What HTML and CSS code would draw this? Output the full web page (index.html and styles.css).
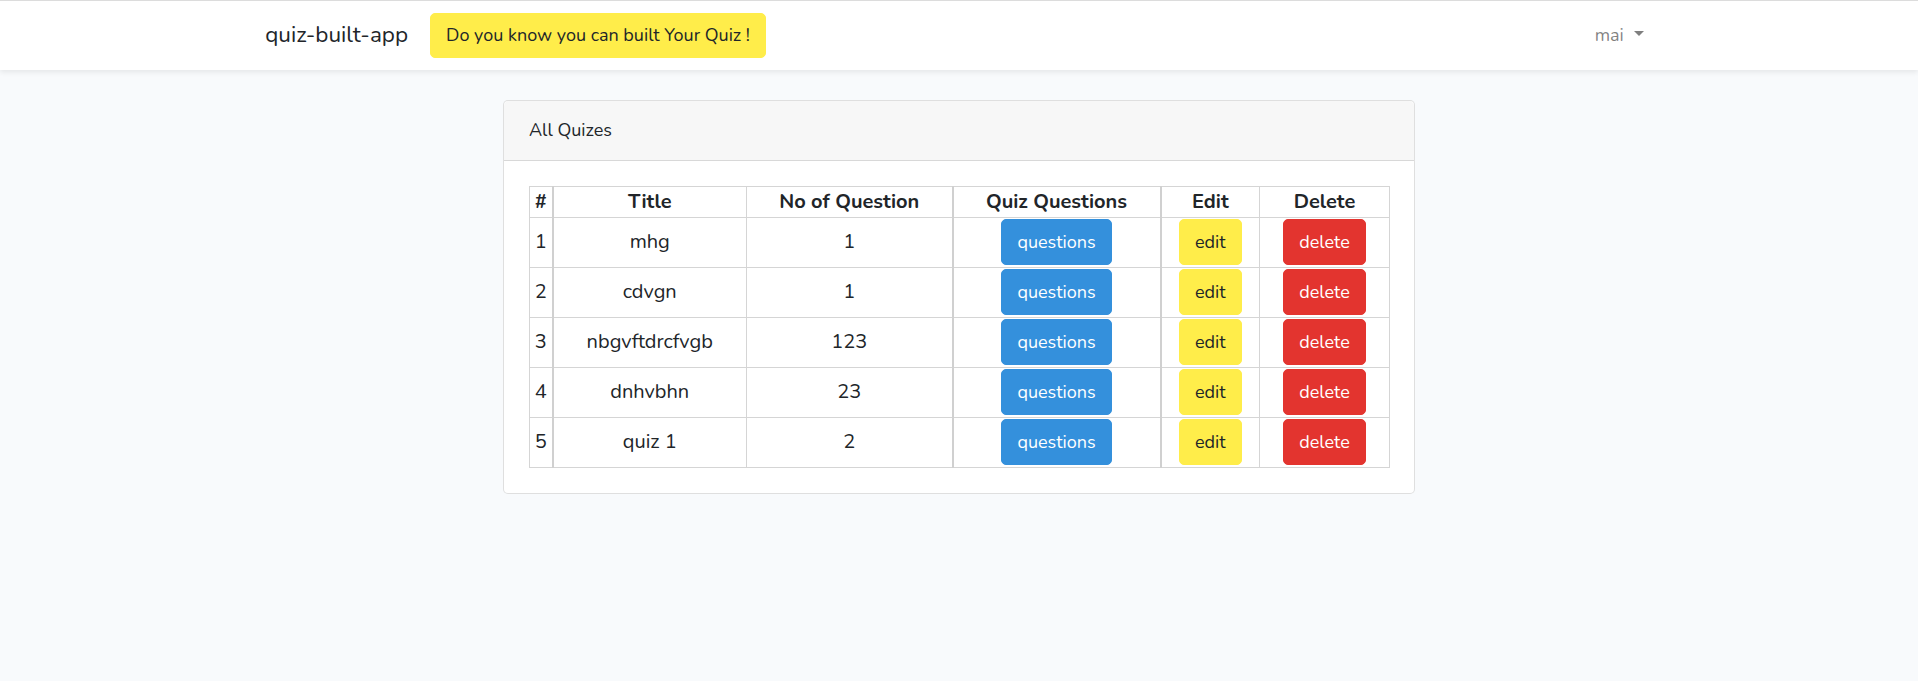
FILE: index.html
```html
<!DOCTYPE html>
<html>
<head>
<meta charset="utf-8">
<title>quiz-built-app</title>
<link rel="stylesheet" href="styles.css">
</head>
<body>
<nav class="navbar">
  <div class="container nav-inner">
    <a class="brand">quiz-built-app</a>
    <span class="tip">Do you know you can built Your Quiz !</span>
    <div class="user">mai <span class="caret"></span></div>
  </div>
</nav>
<main class="main">
  <div class="card">
    <div class="card-header">All Quizes</div>
    <div class="card-body">
      <table class="quiz-table">
        <colgroup>
          <col class="c-num"><col class="c-title"><col class="c-count"><col class="c-q"><col class="c-edit"><col class="c-del">
        </colgroup>
        <thead>
          <tr><th class="thick">#</th><th>Title</th><th class="thick">No of Question</th><th class="thick">Quiz Questions</th><th>Edit</th><th>Delete</th></tr>
        </thead>
        <tbody>
          <tr><td class="thick">1</td><td>mhg</td><td class="thick">1</td><td class="thick"><div class="cell"><a class="btn btn-blue">questions</a></div></td><td><div class="cell"><a class="btn btn-yellow">edit</a></div></td><td><div class="cell"><a class="btn btn-red">delete</a></div></td></tr>
          <tr><td class="thick">2</td><td>cdvgn</td><td class="thick">1</td><td class="thick"><div class="cell"><a class="btn btn-blue">questions</a></div></td><td><div class="cell"><a class="btn btn-yellow">edit</a></div></td><td><div class="cell"><a class="btn btn-red">delete</a></div></td></tr>
          <tr><td class="thick">3</td><td>nbgvftdrcfvgb</td><td class="thick">123</td><td class="thick"><div class="cell"><a class="btn btn-blue">questions</a></div></td><td><div class="cell"><a class="btn btn-yellow">edit</a></div></td><td><div class="cell"><a class="btn btn-red">delete</a></div></td></tr>
          <tr><td class="thick">4</td><td>dnhvbhn</td><td class="thick">23</td><td class="thick"><div class="cell"><a class="btn btn-blue">questions</a></div></td><td><div class="cell"><a class="btn btn-yellow">edit</a></div></td><td><div class="cell"><a class="btn btn-red">delete</a></div></td></tr>
          <tr><td class="thick">5</td><td>quiz 1</td><td class="thick">2</td><td class="thick"><div class="cell"><a class="btn btn-blue">questions</a></div></td><td><div class="cell"><a class="btn btn-yellow">edit</a></div></td><td><div class="cell"><a class="btn btn-red">delete</a></div></td></tr>
        </tbody>
      </table>
    </div>
  </div>
</main>
</body>
</html>
```
FILE: styles.css
```css
* { box-sizing: border-box; }
html, body { margin: 0; }
body {
  background: #f8fafc;
  font-family: "Nunito", "Lato", "Noto Sans", sans-serif;
  font-size: 18px;
  line-height: 1.6;
  color: #212529;
}
.navbar {
  background: #fff;
  border-top: 1px solid #dcdcdc;
  box-shadow: 0 2.5px 5px rgba(0,0,0,.075);
  padding: 10px 0;
}
.container {
  max-width: 1425px;
  margin: 0 auto;
  padding: 0 18.75px;
}
.nav-inner {
  display: flex;
  align-items: center;
  min-height: 48.8px;
}
.brand {
  font-size: 22.5px;
  color: #212529;
  margin-right: 22px;
  line-height: 1.6;
}
.tip {
  background: #ffed4a;
  border: 1px solid #ffed4a;
  border-radius: 5px;
  padding: 7.5px 15px;
  color: #212529;
}
.user {
  margin-left: auto;
  color: rgba(0,0,0,.5);
  padding: 10px 9px 10px 8px;
  display: flex;
  align-items: center;
}
.caret {
  display: inline-block;
  width: 0;
  height: 0;
  margin-left: 10px;
  margin-top: -4px;
  border-top: 5.4px solid rgba(0,0,0,.5);
  border-left: 5.4px solid transparent;
  border-right: 5.4px solid transparent;
}
.main { padding: 30px 0; }
.card {
  width: 912px;
  margin: 0 auto;
  background: #fff;
  border: 1px solid rgba(0,0,0,.125);
  border-radius: 5px;
}
.card-header {
  padding: 15px 25px;
  background: rgba(0,0,0,.03);
  border-bottom: 1px solid rgba(0,0,0,.125);
  border-radius: 5px 5px 0 0;
}
.card-body { padding: 25px; }
.quiz-table {
  width: 100%;
  border-collapse: collapse;
  table-layout: fixed;
  font-size: 20px;
  line-height: 27.3px;
}
.c-num { width: 23px; }
.c-title { width: 194px; }
.c-count { width: 206px; }
.c-q { width: 208px; }
.c-edit { width: 99px; }
.c-del { width: 130px; }
.quiz-table th, .quiz-table td {
  border: 1px solid #d5d5d5;
  padding: 1px;
  text-align: center;
  vertical-align: middle;
}
.quiz-table thead tr { height: 31px; }
.quiz-table tbody tr { height: 50px; }
.quiz-table th { font-weight: 700; }
.quiz-table .thick { border-right: 2px solid #d0d0d0; }
.cell { display: flex; justify-content: center; }
.btn {
  display: block;
  padding: 7.5px 15px;
  border: 1px solid transparent;
  border-radius: 5px;
  line-height: 28.8px;
  font-size: 18px;
}
.btn-blue { background: #3490dc; border-color: #3490dc; color: #fff; }
.btn-yellow { background: #ffed4a; border-color: #ffed4a; color: #212529; }
.btn-red { background: #e3342f; border-color: #e3342f; color: #fff; }
```
